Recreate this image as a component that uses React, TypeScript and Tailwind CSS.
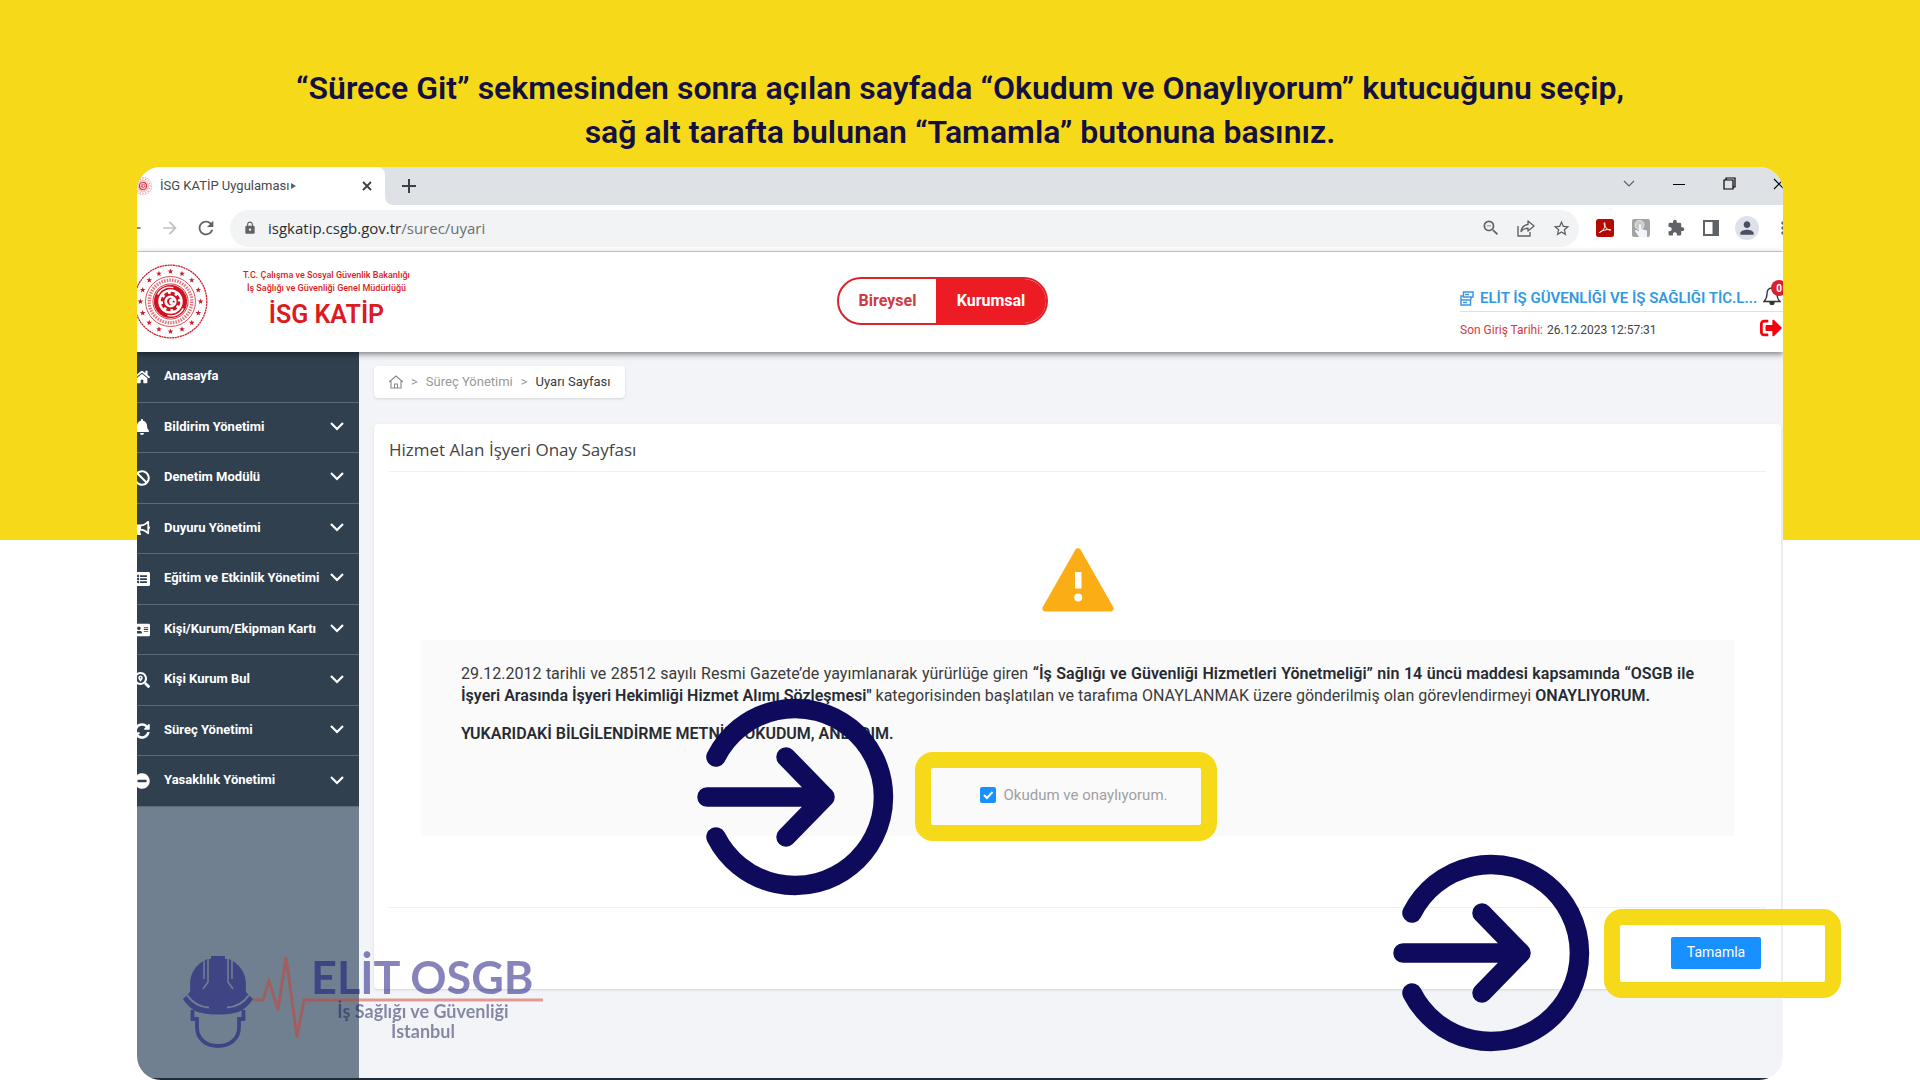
import type { ReactNode } from 'react';
import {
  FaAddressCard,
  FaBan,
  FaBell,
  FaBullhorn,
  FaHome,
  FaListAlt,
  FaMinusCircle,
  FaSearchLocation,
  FaSignOutAlt,
  FaSyncAlt,
} from 'react-icons/fa';
import {
  MdArrowBack,
  MdArrowForward,
  MdExtension,
  MdLock,
  MdMoreVert,
  MdPerson,
  MdRefresh,
  MdStarBorder,
  MdZoomOut,
} from 'react-icons/md';

const NAVY = '#0f0b5c';

const MENU_ITEMS = [
  { label: 'Anasayfa', icon: FaHome, expandable: false },
  { label: 'Bildirim Yönetimi', icon: FaBell, expandable: true },
  { label: 'Denetim Modülü', icon: FaBan, expandable: true },
  { label: 'Duyuru Yönetimi', icon: FaBullhorn, expandable: true },
  { label: 'Eğitim ve Etkinlik Yönetimi', icon: FaListAlt, expandable: true },
  { label: 'Kişi/Kurum/Ekipman Kartı', icon: FaAddressCard, expandable: true },
  { label: 'Kişi Kurum Bul', icon: FaSearchLocation, expandable: true },
  { label: 'Süreç Yönetimi', icon: FaSyncAlt, expandable: true },
  { label: 'Yasaklılık Yönetimi', icon: FaMinusCircle, expandable: true },
];

function starPoints(cx: number, cy: number, r: number) {
  return Array.from({ length: 10 }, (_, i) => {
    const radius = i % 2 === 0 ? r : r * 0.42;
    const a = (i * Math.PI) / 5 - Math.PI / 2;
    return `${(cx + radius * Math.cos(a)).toFixed(2)},${(cy + radius * Math.sin(a)).toFixed(2)}`;
  }).join(' ');
}

/** Ministry seal: ring of stars, lettered band and a gear in the middle */
function Emblem({ className = '' }: { className?: string }) {
  const stars = Array.from({ length: 16 }, (_, i) => {
    const a = (i * Math.PI) / 8;
    return starPoints(38 + 30.5 * Math.cos(a), 38 + 30.5 * Math.sin(a), 3);
  });

  return (
    <svg viewBox="0 0 76 76" className={className} aria-hidden="true">
      <circle cx="38" cy="38" r="36.8" fill="none" stroke="#cf1f2e" strokeWidth="1.3" strokeDasharray="2.2 .5" />
      {stars.map((points) => (
        <polygon key={points} points={points} fill="#c81e2c" />
      ))}
      <circle cx="38" cy="38" r="25.3" fill="none" stroke="#cf1f2e" strokeWidth=".8" />
      <circle cx="38" cy="38" r="21.6" fill="none" stroke="#cf1f2e" strokeWidth="3.4" strokeDasharray="1.6 1.1" opacity=".6" />
      <circle cx="38" cy="38" r="17.8" fill="none" stroke="#cf1f2e" strokeWidth=".9" />
      <circle cx="38" cy="38" r="14.6" fill="none" stroke="#cf1220" strokeWidth="4.4" />
      <path d="M25 31c3-6 10-9 16-7M51 45c-3 6-10 9-16 7" fill="none" stroke="#fff" strokeWidth="1.3" />
      <circle cx="38" cy="38" r="8.4" fill="none" stroke="#cf1220" strokeWidth="3" strokeDasharray="4 2.6" />
      <circle cx="38" cy="38" r="7" fill="none" stroke="#cf1220" strokeWidth="1.6" />
      <path d="M40 34.6a3.8 3.8 0 1 0 0 6.8 3.1 3.1 0 1 1 0-6.8z" fill="#cf1220" />
      <polygon points={starPoints(41.2, 38, 1.6)} fill="#cf1220" />
    </svg>
  );
}

function Chevron() {
  return (
    <svg viewBox="0 0 14 9" className="h-[9px] w-3.5 shrink-0" fill="none" stroke="#fff" strokeWidth="2.2" aria-hidden="true">
      <path d="M1 1l6 6 6-6" />
    </svg>
  );
}

function ToolButton({ label, children }: { label: string; children: ReactNode }) {
  return (
    <button type="button" aria-label={label} className="flex h-9 w-9 shrink-0 items-center justify-center text-[#5f6368]">
      {children}
    </button>
  );
}

function TabStrip() {
  return (
    <div className="flex h-[38px] bg-[#dee1e6]">
      <div className="relative flex w-[248px] items-center rounded-tr-lg bg-white">
        <Emblem className="-ml-[3px] h-[18px] w-[18px] shrink-0" />
        <span className="ml-2 whitespace-nowrap text-[13px] text-[#45494d]">İSG KATİP Uygulaması</span>
        <svg viewBox="0 0 5 6" className="ml-0.5 h-1.5 w-[5px]" fill="#5f6368" aria-hidden="true">
          <path d="M0 0l5 3-5 3z" />
        </svg>
        <button type="button" aria-label="Sekmeyi kapat" className="ml-auto mr-3 flex h-3 w-3 items-center justify-center">
          <svg viewBox="0 0 10 10" className="h-2.5 w-2.5" stroke="#3c4043" strokeWidth="1.8">
            <path d="M1 1l8 8M9 1l-8 8" />
          </svg>
        </button>
        <svg viewBox="0 0 8 8" className="absolute -right-2 bottom-0 h-2 w-2" fill="#fff" aria-hidden="true">
          <path d="M0 0v8h8a8 8 0 0 1-8-8z" />
        </svg>
      </div>
      <button type="button" aria-label="Yeni sekme" className="ml-3 flex w-6 items-center justify-center">
        <svg viewBox="0 0 14 14" className="h-3.5 w-3.5" stroke="#3c4043" strokeWidth="2">
          <path d="M7 0v14M0 7h14" />
        </svg>
      </button>

      <div className="-mr-[21px] ml-auto flex h-[33px] text-black">
        <button type="button" aria-label="Sekme ara" className="flex w-[50px] items-center justify-center">
          <svg viewBox="0 0 12 8" className="h-2 w-3" fill="none" stroke="#5f6368" strokeWidth="1.2">
            <path d="M1 1l5 5 5-5" />
          </svg>
        </button>
        <button type="button" aria-label="Simge durumuna küçült" className="flex w-[50px] items-center justify-center">
          <svg viewBox="0 0 12 12" className="h-3 w-3" stroke="currentColor">
            <path d="M0 6.5h12" />
          </svg>
        </button>
        <button type="button" aria-label="Önceki boyut" className="flex w-[50px] items-center justify-center">
          <svg viewBox="0 0 13 13" className="h-[13px] w-[13px]" fill="none" stroke="currentColor" strokeWidth="1.2">
            <path d="M1 3h9v9H1zM3 3V1h9v9h-2" />
          </svg>
        </button>
        <button type="button" aria-label="Pencereyi kapat" className="flex w-[50px] items-center justify-center">
          <svg viewBox="0 0 12 12" className="h-3 w-3" stroke="currentColor" strokeWidth="1.2">
            <path d="M1 1l10 10M11 1L1 11" />
          </svg>
        </button>
      </div>
    </div>
  );
}

function Toolbar() {
  return (
    <div className="flex h-[47px] items-center overflow-hidden border-b border-[#d5d7da] bg-white">
      <div className="-ml-[21px] flex">
        <ToolButton label="Geri"><MdArrowBack className="h-5 w-5" /></ToolButton>
        <ToolButton label="İleri"><MdArrowForward className="h-5 w-5 text-[#bdc1c6]" /></ToolButton>
        <ToolButton label="Yenile"><MdRefresh className="h-[22px] w-[22px]" /></ToolButton>
      </div>
      <div className="ml-1.5 flex h-[37px] flex-1 items-center rounded-full bg-[#f1f3f4] pl-[13px]">
        <MdLock className="h-3.5 w-3.5 text-[#5f6368]" />
        <a href="#adres" className="ml-[11px] font-['Open_Sans',sans-serif] text-[15px] text-[#2b2e31]">
          isgkatip.csgb.gov.tr<span className="text-[#6b6f73]">/surec/uyari</span>
        </a>
        <div className="ml-auto flex">
          <ToolButton label="Uzaklaştır"><MdZoomOut className="ml-1 h-5 w-5" /></ToolButton>
          <ToolButton label="Paylaş">
            <svg viewBox="0 0 18 17" className="ml-0.5 h-[17px] w-[18px]" fill="none" stroke="currentColor" strokeWidth="1.4" strokeLinejoin="round">
              <path d="M1 6v10h12v-4M11 1l6 5-6 5V8.200c-3.500 0-5.500 1-7 3.300.5-3.800 3-6.500 7-7z" />
            </svg>
          </ToolButton>
          <ToolButton label="Yer işareti"><MdStarBorder className="h-[19px] w-[19px]" /></ToolButton>
        </div>
      </div>
      <div className="-mr-[18px] ml-1.5 flex">
        <ToolButton label="PDF">
          <svg viewBox="0 0 18 18" className="ml-1 h-[18px] w-[18px]">
            <rect width="18" height="18" rx="2.5" fill="#b30b00" />
            <path d="M3.500 13.500c4-2 6-5.500 5.400-9.200-.1-1.200-1-.7-.8.4.5 3.200 2.500 5.600 6 6.600 1 .1.8-.9-.2-.9-3.500 0-6.700.8-9.800 2.600-1 .6-1.200 1-.6.500z" fill="none" stroke="#fff" strokeWidth="1" />
          </svg>
        </ToolButton>
        <ToolButton label="Uzantı">
          <svg viewBox="0 0 18 18" className="ml-1 h-[18px] w-[18px]">
            <rect width="18" height="18" rx="2" fill="#a3a3a3" />
            <circle cx="7.500" cy="6" r="4.500" fill="#c9c9c9" stroke="#e8e8e8" />
            <path d="M7 6c0-1.500 2-1.500 2 0v4l6 1.500V18H7l-4-6c0-1.500 1.500-1.500 4 .5z" fill="#f1f5fb" />
          </svg>
        </ToolButton>
        <ToolButton label="Uzantılar"><MdExtension className="ml-0.5 h-[18px] w-[18px]" /></ToolButton>
        <ToolButton label="Yan panel">
          <svg viewBox="0 0 16 16" className="h-4 w-4" fill="none" stroke="currentColor" strokeWidth="2">
            <path d="M1 1h14v14H1z" />
            <path d="M10.500 1h4v14h-4z" fill="currentColor" />
          </svg>
        </ToolButton>
        <ToolButton label="Profil">
          <span className="flex h-6 w-6 items-center justify-center rounded-full bg-[#dfe1e9]">
            <MdPerson className="h-5 w-5 text-[#4a4f63]" />
          </span>
        </ToolButton>
        <ToolButton label="Menü"><MdMoreVert className="h-5 w-5" /></ToolButton>
      </div>
    </div>
  );
}

function SiteHeader() {
  return (
    <header className="relative z-10 grid h-[100px] grid-cols-[1fr_auto_1fr] items-center bg-white pb-0.5 shadow-[0_2px_6px_rgba(0,0,0,0.5)]">
      <div className="flex items-center">
        <Emblem className="-ml-1 h-[75px] w-[75px] shrink-0" />
        <div className="ml-[35px] pb-0.5 text-center font-medium text-[#dc1a22]">
          <p className="text-[9px] leading-[13px]">T.C. Çalışma ve Sosyal Güvenlik Bakanlığı</p>
          <p className="text-[9px] leading-[13px]">İş Sağlığı ve Güvenliği Genel Müdürlüğü</p>
          <h1 className="mt-1 text-[25px] font-semibold leading-8">İSG KATİP</h1>
        </div>
      </div>

      <div className="mr-[35px] flex h-12 w-[211px] overflow-hidden rounded-full border-2 border-[#d9232e] text-base font-bold">
        <button type="button" className="flex-[97] text-[#cf3a40]">Bireysel</button>
        <button type="button" className="flex-[110] bg-[#ed1c24] text-white">Kurumsal</button>
      </div>

      <div className="w-[323px] justify-self-end pt-8">
        <div className="flex h-[26px] items-center border-b border-[#e0e0e0]">
          <svg viewBox="0 0 14 15" className="h-[15px] w-3.5 shrink-0" fill="none" stroke="#3d96e0" strokeWidth="1.500" aria-hidden="true">
            <path d="M3.500 1h9.500v5H3.500zM1 9h9.500v5H1zM11 8.500V6M1 9V5h2.500M5 3.500h4M3 11.500h4" />
          </svg>
          <a href="#firma" className="ml-1.5 w-[276px] whitespace-nowrap text-[15px] font-semibold text-[#3498e0]">
            ELİT İŞ GÜVENLİĞİ VE İŞ SAĞLIĞI TİC.L...
          </a>
          <button type="button" aria-label="Bildirimler" className="relative mb-1.5 ml-[7px] h-[19px] w-[18px] shrink-0">
            <svg viewBox="0 0 18 19" className="h-[19px] w-[18px]" fill="none" stroke="#333" strokeWidth="1.300">
              <path d="M9 2C5.500 2 4 4.500 4 8c0 4-1 5.500-3 7.500h16C15 13.500 14 12 14 8c0-3.500-1.500-6-5-6z" />
              <path d="M7 16.500a2 2 0 0 0 4 0z" fill="#333" />
            </svg>
            <span className="absolute -right-1.5 -top-1.5 flex h-4 w-4 items-center justify-center rounded-full bg-[#d9212b] text-[10px] font-bold text-white">
              0
            </span>
          </button>
        </div>
        <div className="flex h-9 items-center text-xs">
          <span className="text-[#d8383e]">Son Giriş Tarihi:</span>
          <span className="ml-1 text-[#444]">26.12.2023 12:57:31</span>
          <button type="button" aria-label="Çıkış" className="mb-1 ml-auto mr-px text-[#f5000c]">
            <FaSignOutAlt className="h-[22px] w-[22px]" />
          </button>
        </div>
      </div>
    </header>
  );
}

function Sidebar() {
  return (
    <aside className="w-[222px] shrink-0 bg-[#708090]">
      <nav className="grid h-[455px] auto-rows-fr bg-[#31404f]">
        {MENU_ITEMS.map(({ label, icon: Icon, expandable }) => (
          <button
            key={label}
            type="button"
            className="flex items-center border-b border-[#5d6b78] pb-0.5 pr-[15px] text-left text-[13px] font-bold text-white"
          >
            <Icon className="-ml-[3px] mr-3.5 mt-0.5 h-4 w-4 shrink-0" />
            <span className="flex-1 whitespace-nowrap">{label}</span>
            {expandable && <Chevron />}
          </button>
        ))}
      </nav>
    </aside>
  );
}

function Breadcrumb() {
  return (
    <nav aria-label="Sayfa yolu" className="flex h-8 w-fit items-center gap-2 rounded bg-white px-[15px] text-[13px] text-[#999] shadow-sm">
      <a href="#anasayfa" aria-label="Anasayfa">
        <svg viewBox="0 0 14 14" className="h-3.5 w-3.5" fill="none" stroke="#888" strokeWidth="1.100">
          <path d="M0 7l7-6 7 6M2 6v7h10V6M5.500 13V9h3v4" />
        </svg>
      </a>
      <span>&gt;</span>
      <a href="#surec">Süreç Yönetimi</a>
      <span>&gt;</span>
      <span className="text-[#3a3a3a]">Uyarı Sayfası</span>
    </nav>
  );
}

function ApprovalCard() {
  return (
    <section className="mt-[26px] mr-0.5 rounded bg-white px-[15px] shadow">
      <h2 className="border-b border-[#f0f0f0] pb-[9px] pt-[13px] font-['Open_Sans',sans-serif] text-[17px] leading-[25px] text-[#444]">
        Hizmet Alan İşyeri Onay Sayfası
      </h2>
      <svg viewBox="0 0 72 64" className="mx-auto mt-[76px] h-16 w-[72px]" role="img" aria-label="Uyarı">
        <path d="M33.500 1.500a3 3 0 0 1 5 0l33 58a3 3 0 0 1-2.500 4H3a3 3 0 0 1-2.500-4z" fill="#faad14" />
        <path d="M33 24h6.500v16.500H33z" fill="#fff" />
        <circle cx="36.200" cy="49.500" r="4" fill="#fff" />
      </svg>
      <div className="mx-8 mt-7 bg-[#fafafa] px-10 pb-[30px] pt-[23px] text-[15px] leading-[22px] text-[#3b3b3b]">
        <p className="text-justify text-base leading-[22px]">
          29.12.2012 tarihli ve 28512 sayılı Resmi Gazete’de yayımlanarak yürürlüğe giren{' '}
          <b className="font-semibold text-[#262b33]">
            “İş Sağlığı ve Güvenliği Hizmetleri Yönetmeliği” nin 14 üncü maddesi kapsamında “OSGB ile İşyeri Arasında
            İşyeri Hekimliği Hizmet Alımı Sözleşmesi"
          </b>{' '}
          kategorisinden başlatılan ve tarafıma ONAYLANMAK üzere gönderilmiş olan görevlendirmeyi{' '}
          <b className="font-semibold text-[#262b33]">ONAYLIYORUM.</b>
        </p>
        <p className="mt-4 text-base font-semibold leading-[22px] text-[#262b33]">
          YUKARIDAKİ BİLGİLENDİRME METNİNİ OKUDUM, ANLADIM.
        </p>
        <div className="mt-[39px] flex justify-center text-[#a0a0a0]">
          <label className="flex items-center gap-2 pr-2">
            <span className="relative flex h-4 w-4">
              <input type="checkbox" defaultChecked className="h-4 w-4 appearance-none rounded-xs bg-[#1890ff]" />
              <svg viewBox="0 0 16 16" className="pointer-events-none absolute inset-0 h-4 w-4" fill="none" stroke="#fff" strokeWidth="2" aria-hidden="true">
                <path d="M4 8l3 3 5.500-6" />
              </svg>
            </span>
            Okudum ve onaylıyorum.
          </label>
        </div>
      </div>
      <footer className="mt-[71px] flex justify-end border-t border-[#f0f0f0] pb-5 pr-[5px] pt-[29px]">
        <button type="button" className="h-8 w-[90px] rounded-xs bg-[#1890ff] pb-0.5 text-sm text-white">
          Tamamla
        </button>
      </footer>
    </section>
  );
}

/** Open ring with an arrow entering it, laid over the window */
function PointerArrow({ className }: { className: string }) {
  return (
    <svg
      viewBox="0 0 198 198"
      className={`absolute h-[198px] w-[198px] ${className}`}
      fill="none"
      stroke={NAVY}
      strokeWidth="19.500"
      strokeLinecap="round"
      strokeLinejoin="round"
      aria-hidden="true"
    >
      <path d="M20 59a88.500 88.500 0 1 1 0 80" />
      <path d="M11 99h118M90 59l39 40-39 40" />
    </svg>
  );
}

function Watermark() {
  return (
    <div className="absolute left-[183px] top-[953px] h-[96px] w-[362px] text-[#0f0b7a] opacity-50">
      <svg viewBox="0 0 362 96" className="absolute inset-0 h-full w-full" fill="none" aria-hidden="true">
        <mask id="helmet-slits">
          <path d="M-4 0h84v96H-4z" fill="#fff" />
          <path d="M21 5v21M25 5v24l-5 7M49 5v21M45 5v24l5 7" stroke="#000" strokeWidth="1.500" />
          <path d="M4 42c6 9 13 12 22 12.500M66 42c-6 9-13 12-22 12.500" stroke="#000" strokeWidth="2" />
        </mask>
        <path d="M70 47h10l6-19 9 29 8-53 11 80 7-37h239" stroke="#d1402f" strokeWidth="3" />
        <path
          d="M28 3h14v3h4c11 5 17 14 17 26 0 4-1 6 1 8l6 6c-6 9-12 13-19 14-9 2-23 2-32 0C12 59 6 55 0 46l6-6c2-2 1-4 1-8C7 20 13 11 24 6h4z"
          fill="currentColor"
          mask="url(#helmet-slits)"
        />
        <path d="M9.500 57v9h4.500v8c0 12 9 19 21 19s21-7 21-19v-8h4.500v-9" stroke="currentColor" strokeWidth="3.800" />
      </svg>
      <p className="absolute left-[128px] top-0 whitespace-nowrap font-[Lato,sans-serif] text-[45px] font-bold leading-[48px]">ELİT OSGB</p>
      <div className="absolute left-[128px] top-[48px] w-[224px] text-center font-[Lato,sans-serif] text-lg font-bold leading-5 text-[#1a1c4f]">
        <p>İş Sağlığı ve Güvenliği</p>
        <p>İstanbul</p>
      </div>
    </div>
  );
}

export default function App() {
  return (
    <div className="relative flex min-h-screen flex-col bg-[linear-gradient(#f6da1a_50%,#fff_50%)] font-[Roboto,'Liberation_Sans',sans-serif]">
      <p className="pb-[13px] pt-[66px] text-center text-[32px] font-semibold leading-[44px] text-[#14103f]">
        “Sürece Git” sekmesinden sonra açılan sayfada “Okudum ve Onaylıyorum” kutucuğunu seçip,
        <br />
        sağ alt tarafta bulunan “Tamamla” butonuna basınız.
      </p>

      <main className="mx-[137px] flex flex-1 flex-col overflow-hidden rounded-3xl bg-white">
        <TabStrip />
        <Toolbar />
        <SiteHeader />
        <div className="flex flex-1 border-b-2 border-[#1f2a38]">
          <Sidebar />
          <div className="flex-1 bg-[#f2f4f8] pl-[15px] pt-[14px]">
            <Breadcrumb />
            <ApprovalCard />
          </div>
        </div>
      </main>

      <Watermark />
      <PointerArrow className="left-[696px] top-[698px]" />
      <PointerArrow className="left-[1392px] top-[854px]" />
      <div className="pointer-events-none absolute left-[915px] top-[752px] h-[89px] w-[302px] rounded-[18px] border-16 border-[#f6da1a]" />
      <div className="pointer-events-none absolute left-[1604px] top-[909px] h-[89px] w-[237px] rounded-[18px] border-16 border-[#f6da1a]" />
    </div>
  );
}
